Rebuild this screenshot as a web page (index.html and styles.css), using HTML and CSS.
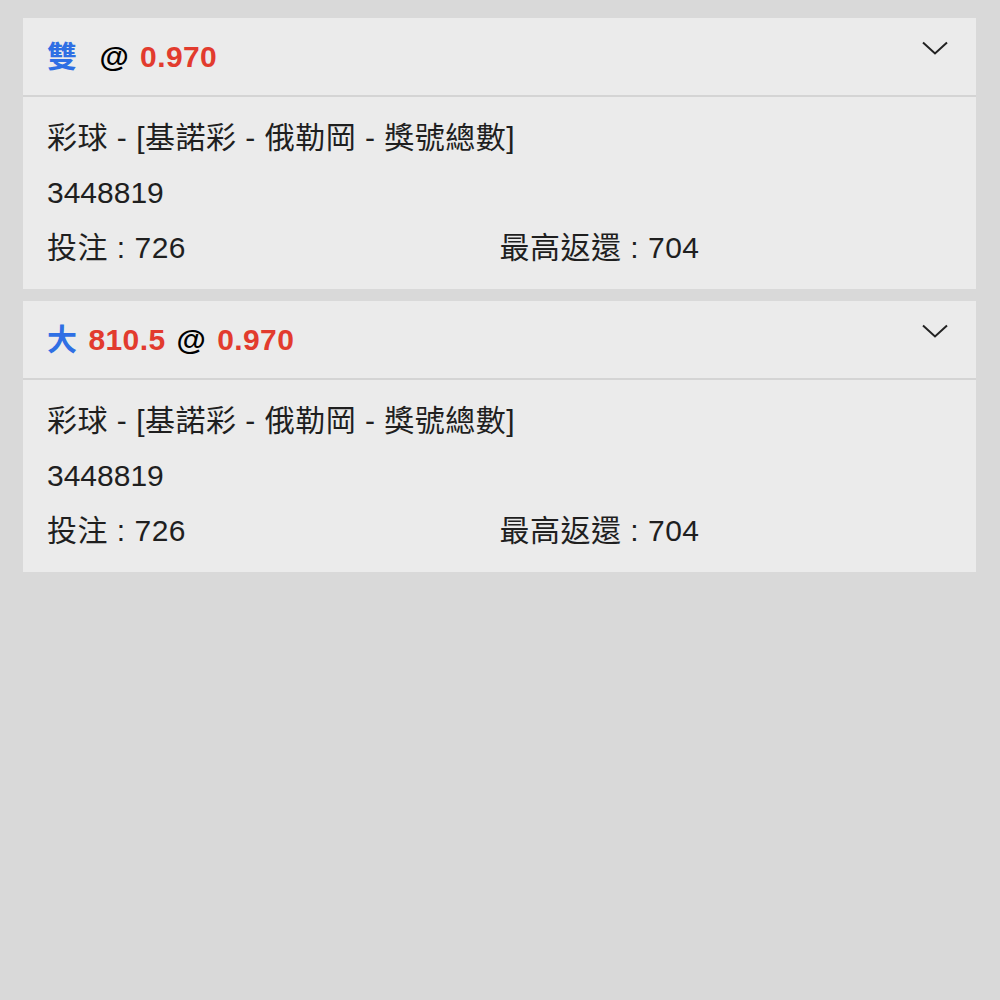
FILE: index.html
```html
<!DOCTYPE html>
<html lang="zh-Hant">
<head>
  <meta charset="UTF-8">
  <title>注單</title>
  <link rel="stylesheet" href="styles.css">
</head>
<body>
  <div class="bet-list">
    <div class="bet-card">
      <div class="bet-head">
        <div class="bet-title">
          <span class="pick">雙</span>
          <span class="line"></span>
          <span class="at">@</span>
          <span class="odds">0.970</span>
        </div>
        <svg class="chevron" width="26" height="14" viewBox="0 0 26 14"><path d="M1 1.5 L13 12.5 L25 1.5" fill="none" stroke="#222" stroke-width="2"/></svg>
      </div>
      <div class="bet-body">
        <div class="bet-game">彩球 - [基諾彩 - 俄勒岡 - 獎號總數]</div>
        <div>3448819</div>
        <div class="bet-nums">
          <span>投注 : 726</span>
          <span>最高返還 : 704</span>
        </div>
      </div>
    </div>

    <div class="bet-card">
      <div class="bet-head">
        <div class="bet-title">
          <span class="pick">大</span>
          <span class="line">810.5</span>
          <span class="at">@</span>
          <span class="odds">0.970</span>
        </div>
        <svg class="chevron" width="26" height="14" viewBox="0 0 26 14"><path d="M1 1.5 L13 12.5 L25 1.5" fill="none" stroke="#222" stroke-width="2"/></svg>
      </div>
      <div class="bet-body">
        <div class="bet-game">彩球 - [基諾彩 - 俄勒岡 - 獎號總數]</div>
        <div>3448819</div>
        <div class="bet-nums">
          <span>投注 : 726</span>
          <span>最高返還 : 704</span>
        </div>
      </div>
    </div>
  </div>
</body>
</html>
```

FILE: styles.css
```css
body { margin: 0; padding: 18px 24px 0 23px; background: #d9d9d9; font-family: "Liberation Sans", "Noto Sans CJK TC", sans-serif; color: #1f1f1f; }
.bet-list { display: flex; flex-direction: column; gap: 12px; }
.bet-card { background: #ebebeb; }
.bet-head { display: flex; justify-content: space-between; height: 77px; padding: 0 28px 0 24px; border-bottom: 2px solid #d4d4d4; }
.bet-title { display: flex; align-items: center; gap: 11px; font-size: 30px; font-weight: bold; line-height: 30px; letter-spacing: 0.4px; }
.pick { color: #2f6fe4; }
.line, .odds { color: #e23b2e; }
.at { color: #000; }
.chevron { margin-top: 23px; }
.bet-body { padding: 13px 24px 14px; font-size: 30px; line-height: 55px; }
.bet-game { letter-spacing: 0.5px; }
.bet-nums { display: grid; grid-template-columns: 1fr 1fr; letter-spacing: 0.5px; }
```
